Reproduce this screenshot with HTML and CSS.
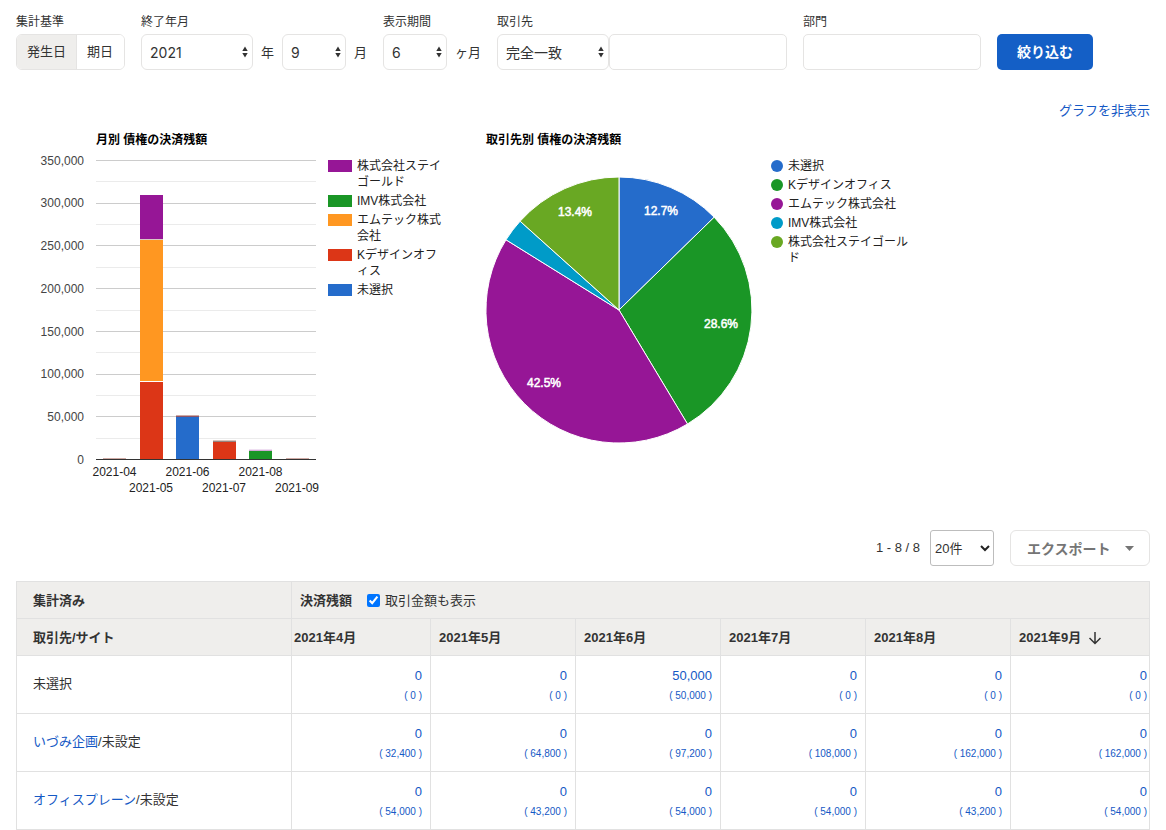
FILE: index.html
```html
<!DOCTYPE html>
<html lang="ja">
<head>
<meta charset="utf-8">
<meta name="viewport" content="width=device-width, initial-scale=1">
<title>債権の決済残額</title>
<link rel="stylesheet" href="styles.css">
</head>
<body>
<svg class="sprite" width="0" height="0" aria-hidden="true">
  <symbol id="updown" viewBox="0 0 6 12"><path d="M3 0.5 5.7 5H0.3zM3 11.5 0.3 7h5.4z"/></symbol>
</svg>

<form class="filters">
  <div class="field">
    <span class="label">集計基準</span>
    <div class="segments">
      <button type="button" class="segment segment-on">発生日</button>
      <button type="button" class="segment">期日</button>
    </div>
  </div>
  <div class="field">
    <label class="label" for="year">終了年月</label>
    <div class="controls">
      <div class="select wide"><select id="year"><option>2021</option></select><svg class="updown"><use href="#updown"/></svg></div>
      <span class="unit">年</span>
      <div class="select"><select aria-label="月"><option>9</option></select><svg class="updown"><use href="#updown"/></svg></div>
      <span class="unit">月</span>
    </div>
  </div>
  <div class="field">
    <label class="label" for="span">表示期間</label>
    <div class="controls">
      <div class="select"><select id="span"><option>6</option></select><svg class="updown"><use href="#updown"/></svg></div>
      <span class="unit">ヶ月</span>
    </div>
  </div>
  <div class="field">
    <label class="label" for="partner">取引先</label>
    <div class="controls joined">
      <div class="select wide"><select aria-label="一致条件"><option>完全一致</option></select><svg class="updown"><use href="#updown"/></svg></div>
      <input class="text" type="text" id="partner">
    </div>
  </div>
  <div class="field">
    <label class="label" for="section">部門</label>
    <input class="text" type="text" id="section">
  </div>
  <button type="button" class="submit">絞り込む</button>
</form>

<div class="toggle"><a href="#charts">グラフを非表示</a></div>

<section class="charts" id="charts">
  <svg class="bar-chart" viewBox="16 130 312 370" role="img" aria-label="月別 債権の決済残額">
    <text class="chart-title" x="96" y="144">月別 債権の決済残額</text>
    <g class="minor">
      <path d="M96 181.500h220M96 224.500h220M96 267.500h220M96 310.500h220M96 352.500h220M96 395.500h220M96 438.500h220"/>
    </g>
    <g class="major">
      <path d="M96 160.500h220M96 203.500h220M96 245.500h220M96 288.500h220M96 331.500h220M96 374.500h220M96 416.500h220"/>
    </g>
    <g class="y-labels">
      <text x="84" y="165">350,000</text>
      <text x="84" y="207">300,000</text>
      <text x="84" y="250">250,000</text>
      <text x="84" y="293">200,000</text>
      <text x="84" y="336">150,000</text>
      <text x="84" y="378">100,000</text>
      <text x="84" y="421">50,000</text>
      <text x="84" y="464">0</text>
    </g>
    <rect class="trace" x="103" y="458" width="23" height="1"/>
    <rect class="purple" x="140" y="195" width="23" height="44"/>
    <rect class="joint" x="140" y="239" width="23" height="1"/>
    <rect class="orange" x="140" y="240" width="23" height="141"/>
    <rect class="gap" x="140" y="381" width="23" height="1"/>
    <rect class="red" x="140" y="382" width="23" height="77"/>
    <rect class="trace" x="176" y="415" width="23" height="1"/>
    <rect class="trace-wine" x="176" y="416" width="23" height="1"/>
    <rect class="blue" x="176" y="417" width="23" height="42"/>
    <rect class="trace-pale" x="213" y="440" width="23" height="1"/>
    <rect class="trace-gray" x="213" y="441" width="23" height="1"/>
    <rect class="red" x="213" y="442" width="23" height="17"/>
    <rect class="trace-lilac" x="249" y="449" width="23" height="1"/>
    <rect class="trace-mauve" x="249" y="450" width="23" height="1"/>
    <rect class="green" x="249" y="451" width="23" height="8"/>
    <rect class="trace" x="286" y="458" width="23" height="1"/>
    <path class="baseline" d="M96 459.500h220"/>
    <g class="x-labels">
      <text x="114.500" y="476">2021-04</text>
      <text x="151" y="492">2021-05</text>
      <text x="187.500" y="476">2021-06</text>
      <text x="224" y="492">2021-07</text>
      <text x="260.500" y="476">2021-08</text>
      <text x="297" y="492">2021-09</text>
    </g>
  </svg>
  <ul class="legend legend-bar">
    <li><i class="swatch bg-purple"></i><span>株式会社ステイゴールド</span></li>
    <li><i class="swatch bg-green"></i><span>IMV株式会社</span></li>
    <li><i class="swatch bg-orange"></i><span>エムテック株式会社</span></li>
    <li><i class="swatch bg-red"></i><span>Kデザインオフィス</span></li>
    <li><i class="swatch bg-blue"></i><span>未選択</span></li>
  </ul>
  <svg class="pie-chart" viewBox="445 130 326 370" role="img" aria-label="取引先別 債権の決済残額">
    <text class="chart-title" x="486" y="144">取引先別 債権の決済残額</text>
    <g class="slices">
      <path class="blue" d="M619 310V177A133 133 0 0 1 714.200 217.200Z"/>
      <path class="green" d="M619 310 714.200 217.200A133 133 0 0 1 687.500 424Z"/>
      <path class="purple" d="M619 310 687.500 424A133 133 0 0 1 506 239.800Z"/>
      <path class="cyan" d="M619 310 506 239.800A133 133 0 0 1 520.100 221.200Z"/>
      <path class="lime" d="M619 310 520.100 221.200A133 133 0 0 1 619 177Z"/>
    </g>
    <g class="pie-labels">
      <text x="661" y="215">12.7%</text>
      <text x="721" y="328">28.6%</text>
      <text x="544" y="387">42.5%</text>
      <text x="575" y="216">13.4%</text>
    </g>
  </svg>
  <ul class="legend legend-pie">
    <li><i class="dot bg-blue"></i><span>未選択</span></li>
    <li><i class="dot bg-green"></i><span>Kデザインオフィス</span></li>
    <li><i class="dot bg-purple"></i><span>エムテック株式会社</span></li>
    <li><i class="dot bg-cyan"></i><span>IMV株式会社</span></li>
    <li><i class="dot bg-lime"></i><span>株式会社ステイゴールド</span></li>
  </ul>
</section>

<div class="pager">
  <span class="range">1 - 8 / 8</span>
  <div class="count"><select aria-label="表示件数"><option>20件</option></select><svg viewBox="0 0 10 7"><path d="M1 1l4 4 4-4"/></svg></div>
  <button type="button" class="export">エクスポート<svg viewBox="0 0 9 5"><path d="M0 0h9L4.500 5z"/></svg></button>
</div>

<table class="balances">
  <colgroup>
    <col class="col-name"><col class="col-edge"><col class="col-month"><col class="col-month"><col class="col-month"><col class="col-month"><col>
  </colgroup>
  <thead>
    <tr>
      <th class="name">集計済み</th>
      <th colspan="6"><div class="heading"><span>決済残額</span><label class="check"><input type="checkbox" checked>取引金額も表示</label></div></th>
    </tr>
    <tr>
      <th class="name">取引先/サイト</th>
      <th class="tight">2021年4月</th>
      <th>2021年5月</th>
      <th>2021年6月</th>
      <th>2021年7月</th>
      <th>2021年8月</th>
      <th><div class="sorted">2021年9月<svg viewBox="0 0 14 14"><path d="M7 1v11.500M1.500 7 7 12.500 12.500 7"/></svg></div></th>
    </tr>
  </thead>
  <tbody>
    <tr>
      <td class="name">未選択</td>
      <td><a href="#">0<small>( 0 )</small></a></td>
      <td><a href="#">0<small>( 0 )</small></a></td>
      <td><a href="#">50,000<small>( 50,000 )</small></a></td>
      <td><a href="#">0<small>( 0 )</small></a></td>
      <td><a href="#">0<small>( 0 )</small></a></td>
      <td><a href="#">0<small>( 0 )</small></a></td>
    </tr>
    <tr>
      <td class="name"><a href="#">いづみ企画</a>/未設定</td>
      <td><a href="#">0<small>( 32,400 )</small></a></td>
      <td><a href="#">0<small>( 64,800 )</small></a></td>
      <td><a href="#">0<small>( 97,200 )</small></a></td>
      <td><a href="#">0<small>( 108,000 )</small></a></td>
      <td><a href="#">0<small>( 162,000 )</small></a></td>
      <td><a href="#">0<small>( 162,000 )</small></a></td>
    </tr>
    <tr>
      <td class="name"><a href="#">オフィスプレーン</a>/未設定</td>
      <td><a href="#">0<small>( 54,000 )</small></a></td>
      <td><a href="#">0<small>( 43,200 )</small></a></td>
      <td><a href="#">0<small>( 54,000 )</small></a></td>
      <td><a href="#">0<small>( 54,000 )</small></a></td>
      <td><a href="#">0<small>( 43,200 )</small></a></td>
      <td><a href="#">0<small>( 54,000 )</small></a></td>
    </tr>
  </tbody>
</table>
</body>
</html>
```

FILE: styles.css
```css
* { box-sizing: border-box; }

body {
  margin: 0;
  padding: 14px 16px 0;
  background: #fff;
  color: #333;
  font: 13px/20px "Liberation Sans", "Noto Sans CJK JP", sans-serif;
}

a { color: #1559c5; text-decoration: none; }
button, input, select { margin: 0; font-family: inherit; color: inherit; }
.sprite { position: absolute; }

/* Filters */
.filters { display: flex; align-items: flex-end; gap: 16px; }
.field { display: flex; flex-direction: column; gap: 4px; }
.label { font-size: 12px; line-height: 16px; }
.controls { display: flex; align-items: center; gap: 8px; }
.joined { gap: 0; }
.unit { padding-top: 2px; }

.segments {
  display: flex;
  height: 36px;
  border: 1px solid #e5e4e3;
  border-radius: 6px;
  overflow: hidden;
}
.segment {
  padding: 0 10px 4px;
  border: 0;
  background: #fff;
  font-size: 13px;
}
.segment + .segment { border-left: 1px solid #e5e4e3; padding-right: 11px; }
.segment-on { background: #efeeec; }

.select { position: relative; width: 64px; }
.wide { width: 112px; }
.select select {
  display: block;
  appearance: none;
  width: 100%;
  height: 36px;
  padding: 0 20px 0 8px;
  border: 1px solid #e5e4e3;
  border-radius: 6px;
  background: #fff;
  font: 14px Inter, "Noto Sans CJK JP", sans-serif;
}
.updown {
  position: absolute;
  top: 12px;
  right: 5px;
  width: 6px;
  height: 12px;
  fill: #333;
  pointer-events: none;
}
.text {
  width: 178px;
  height: 36px;
  padding: 0 8px;
  border: 1px solid #e5e4e3;
  border-radius: 5px;
  font-size: 14px;
}
.submit {
  width: 96px;
  height: 36px;
  padding: 0 0 2px;
  border: 0;
  border-radius: 5px;
  background: #145fc6;
  color: #fff;
  font-size: 14px;
  font-weight: 700;
}
.toggle { margin-top: 31px; text-align: right; }

/* Charts */
.charts { display: flex; align-items: flex-start; margin-top: 9px; }
.bar-chart { flex: none; width: 312px; height: 370px; }
.pie-chart { flex: none; width: 326px; height: 370px; }
.charts text { font-size: 12px; }
.chart-title { font-weight: 700; fill: #000; }
.major path { stroke: #ccc; }
.minor path { stroke: #ebebeb; }
.baseline { stroke: #333; }
.y-labels { fill: #444; text-anchor: end; }
.x-labels { fill: #222; text-anchor: middle; }
.pie-labels { fill: #fff; text-anchor: middle; stroke: #fff; stroke-width: 0.5; }
.slices { stroke: #fff; stroke-width: 1; }

.purple { fill: #961696; }
.orange { fill: #ff9721; }
.red { fill: #dc3617; }
.blue { fill: #256ccb; }
.green { fill: #1a9626; }
.cyan { fill: #009bc8; }
.lime { fill: #69a823; }
.joint { fill: #d9c9c4; }
.gap { fill: #fff; }
.trace { fill: #cfaaa4; }
.trace-wine { fill: #8c5468; }
.trace-pale { fill: #d9c5bd; }
.trace-gray { fill: #98837f; }
.trace-lilac { fill: #efdff2; }
.trace-mauve { fill: #d3a9d6; }

.legend {
  display: flex;
  flex: none;
  flex-direction: column;
  gap: 3px;
  margin: 28px 0 0;
  padding: 0;
  list-style: none;
  color: #222;
  font-size: 12px;
  line-height: 16px;
  word-break: break-all;
  line-break: anywhere;
}
.legend li { display: flex; align-items: flex-start; gap: 5px; }
.legend-bar { width: 117px; }
.legend-pie { width: 141px; }
.swatch, .dot { flex: none; height: 12px; margin-top: 2px; }
.swatch { width: 24px; }
.dot { width: 12px; border-radius: 50%; }
.bg-purple { background: #961696; }
.bg-orange { background: #ff9721; }
.bg-red { background: #dc3617; }
.bg-blue { background: #256ccb; }
.bg-green { background: #1a9626; }
.bg-cyan { background: #009bc8; }
.bg-lime { background: #69a823; }

/* Pager and export */
.pager {
  display: flex;
  align-items: center;
  justify-content: flex-end;
  margin-top: 30px;
}
.range { margin-right: 10px; }
.count { position: relative; width: 64px; margin-right: 16px; }
.count select {
  display: block;
  appearance: none;
  width: 100%;
  height: 36px;
  padding: 0 16px 0 4px;
  border: 1px solid #bdbdbd;
  border-radius: 3px;
  background: #fff;
  font-size: 13px;
}
.count svg {
  position: absolute;
  top: 15px;
  right: 4px;
  width: 10px;
  height: 7px;
  fill: none;
  stroke: #222;
  stroke-width: 2;
  pointer-events: none;
}
.export {
  display: flex;
  align-items: center;
  justify-content: space-between;
  width: 140px;
  height: 36px;
  padding: 0 15px 0 16px;
  border: 1px solid #e5e4e3;
  border-radius: 6px;
  background: #fff;
  color: #757575;
  font-size: 14px;
  font-weight: 700;
  white-space: nowrap;
}
.export svg { flex: none; width: 9px; height: 5px; fill: #757575; }

/* Balance table */
.balances {
  width: 100%;
  margin-top: 15px;
  border-collapse: collapse;
  table-layout: fixed;
}
.col-name { width: 275px; }
.col-edge { width: 139px; }
.col-month { width: 145px; }
.balances th, .balances td { border: 1px solid #e1e1e1; }
.balances th {
  height: 37px;
  padding: 1px 8px 0;
  background: #efeeec;
  font-weight: 700;
  text-align: left;
}
.balances td { height: 58px; padding: 2px 8px 0; text-align: right; }
.balances td:last-child { padding-right: 2px; }
.balances .name { padding-left: 16px; text-align: left; }
.balances td.name { padding-top: 0; padding-bottom: 2px; }
.balances .tight { padding-left: 2px; }
.balances small { display: block; font-size: 10px; }
.heading { display: flex; align-items: center; gap: 15px; }
.check { display: flex; align-items: center; gap: 5px; font-weight: 400; }
.check input { width: 13px; height: 13px; }
.sorted { display: flex; align-items: center; gap: 7px; }
.sorted svg { width: 14px; height: 14px; fill: none; stroke: #333; stroke-width: 1.5; }
```
